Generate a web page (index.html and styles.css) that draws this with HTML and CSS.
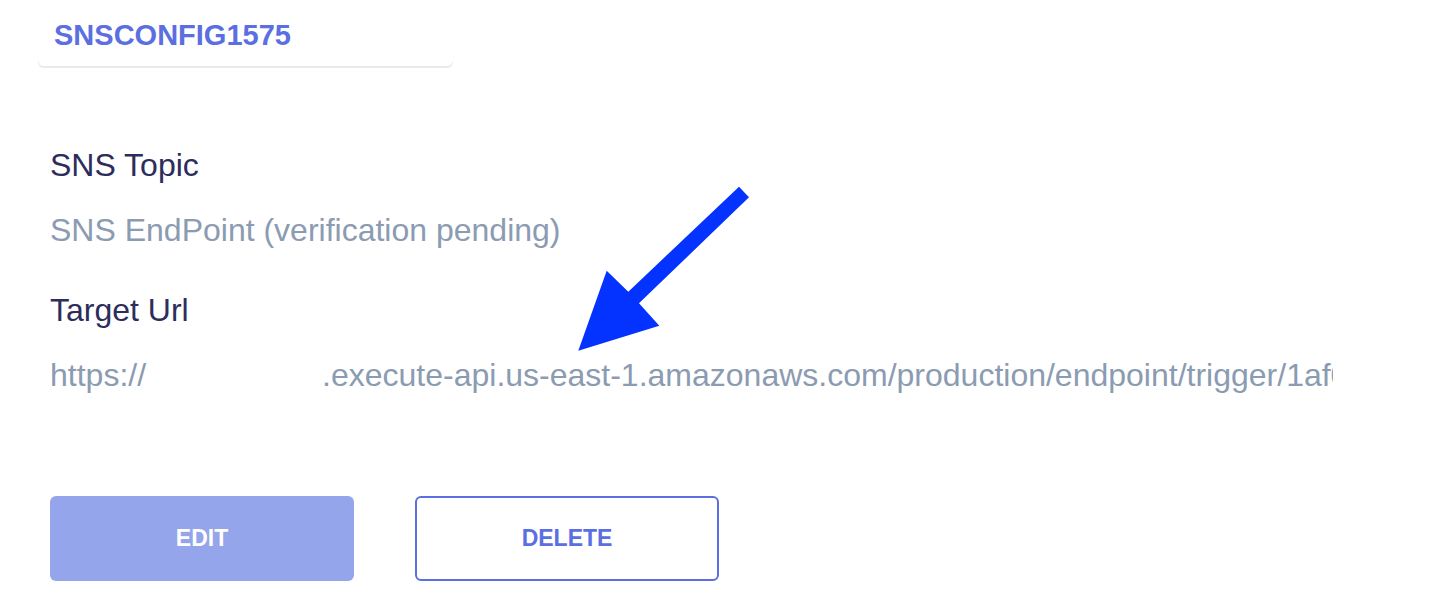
FILE: index.html
```html
<!DOCTYPE html>
<html lang="en">
<head>
<meta charset="utf-8">
<title>SNS Config</title>
<link rel="stylesheet" href="styles.css">
</head>
<body>
<div class="page">
  <div class="header-card">
    <span class="config-name">SNSCONFIG1575</span>
  </div>

  <div class="details">
    <div class="field">
      <div class="label">SNS Topic</div>
      <div class="value">SNS EndPoint (verification pending)</div>
    </div>
    <div class="field">
      <div class="label">Target Url</div>
      <div class="value url">https://<span class="redacted"></span>.execute-api.us-east-1.amazonaws.com/production/endpoint/trigger/1af0c3d2e9b84a7f</div>
    </div>
  </div>

  <div class="actions">
    <button class="btn btn-edit">EDIT</button>
    <button class="btn btn-delete">DELETE</button>
  </div>

  <svg class="annotation" width="200" height="190" viewBox="560 170 200 190" aria-hidden="true">
    <polygon points="739,186.7 749,197.3 639,303.3 659.3,325.7 578.3,350.7 606.7,270.7 628.3,291.7" fill="#0433ff"/>
  </svg>
</div>
</body>
</html>
```

FILE: styles.css
```css
* { box-sizing: border-box; }

html, body {
  margin: 0;
  padding: 0;
  background: #ffffff;
}

body {
  font-family: "Liberation Sans", Arial, Helvetica, sans-serif;
}

.page {
  position: relative;
  width: 1434px;
  height: 616px;
  overflow: hidden;
}

.header-card {
  width: 415px;
  margin-left: 38px;
  height: 66px;
  padding: 18px 16px 0;
  background: #fff;
  border-radius: 0 0 6px 6px;
  box-shadow: 0 2px 0 #e7eaef, 0 1px 2px rgba(40, 50, 80, 0.03);
}

.config-name {
  display: block;
  font-size: 29px;
  line-height: 34px;
  font-weight: 700;
  color: #5b6ee2;
}

.details {
  padding-left: 50px;
  margin-top: 81px;
  display: flex;
  flex-direction: column;
  gap: 44px;
}

.field {
  display: flex;
  flex-direction: column;
  gap: 29px;
}

.label {
  font-size: 32px;
  line-height: 36px;
  color: #2c2d5b;
}

.value {
  font-size: 32px;
  line-height: 36px;
  color: #8b9bb1;
}

.url {
  width: 1283px;
  white-space: nowrap;
  overflow: hidden;
}

.redacted {
  display: inline-block;
  width: 176px;
}

.actions {
  display: flex;
  gap: 61px;
  padding-left: 50px;
  margin-top: 103px;
}

.btn {
  width: 304px;
  height: 85px;
  border-radius: 6px;
  font-family: "Liberation Sans", Arial, sans-serif;
  font-size: 23px;
  font-weight: 700;
  cursor: pointer;
}

.btn-edit {
  background: #95a5eb;
  border: none;
  color: #ffffff;
}

.btn-delete {
  background: #ffffff;
  border: 2px solid #5b6ee2;
  color: #5b6ee2;
}

.annotation {
  position: absolute;
  left: 560px;
  top: 170px;
}
```
